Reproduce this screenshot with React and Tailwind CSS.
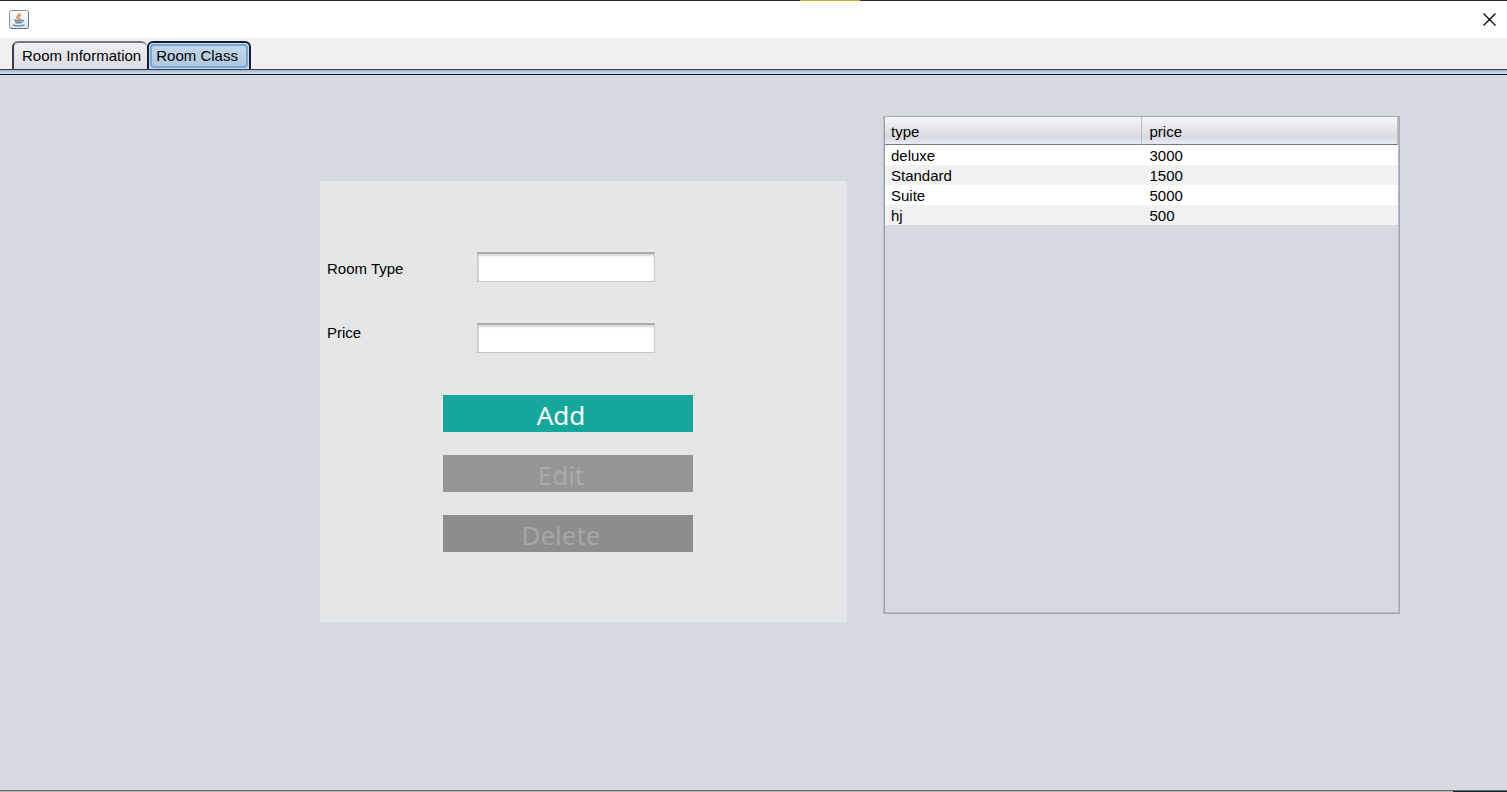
import { useState } from 'react'

const rooms = [
  { type: 'deluxe', price: 3000 },
  { type: 'Standard', price: 1500 },
  { type: 'Suite', price: 5000 },
  { type: 'hj', price: 500 },
]

const JavaIcon = () => (
  <svg width="20" height="19" viewBox="0 0 20 19" fill="none">
    <defs>
      <linearGradient id="cupBg" x1="0" y1="0" x2="0" y2="1">
        <stop offset="0" stopColor="#ffffff" />
        <stop offset="1" stopColor="#dfe5ea" />
      </linearGradient>
    </defs>
    <rect x="0.5" y="0.5" width="19" height="18" rx="2" fill="url(#cupBg)" stroke="#8796a5" />
    <path d="M1.5 18.5h17M19.5 2v15" stroke="#587691" />
    <path d="M10.5 3c.8 1.8-3.2 2.6-2.6 4.2.2.7 1.2.9 1 1.8M12 5.2c-2 1-2.6 1.8-1.6 2.8.4.4 0 .8-.4 1" stroke="#ee8d4a" strokeWidth="1.5" />
    <path d="M5.5 10h7.5l-.8 3H6.5z" fill="#8ba3b8" />
    <path d="M5 10h8.5M6.5 13h6M13 10.5c2.4-1 2.2 1.6-.6 2" stroke="#67869f" />
    <path d="M4 14.8c1.5 1.4 9.5 1.4 11.5 0" stroke="#67869f" strokeWidth="1.4" />
  </svg>
)

const CloseIcon = () => (
  <svg width="13" height="13" viewBox="0 0 13 13" stroke="#000" strokeWidth="1.2">
    <path d="M0.5 0.5l12 12M12.5 0.5l-12 12" />
  </svg>
)

const Tab = ({ label, active, onClick }) => (
  <button
    type="button"
    role="tab"
    aria-selected={active}
    onClick={onClick}
    className={
      active
        ? 'h-7 rounded-t-md border-2 border-b-0 border-[#141a30] bg-[#c9dcee] px-px'
        : 'h-7 rounded-t-md border-2 border-r-0 border-b-0 border-t-[#77787d] border-l-[#3d3e47] bg-linear-to-b from-[#eeeff3] to-[#dcdee5] pt-px pr-1.5 pl-2'
    }
  >
    {active ? (
      <span className="block h-6 rounded-sm border-2 border-[#77a5d4] bg-linear-to-b from-[#c3d6e8] to-[#afc9df] pr-2 pl-1 leading-5">
        {label}
      </span>
    ) : (
      label
    )}
  </button>
)

const Field = ({ id, label, labelClass }) => (
  <div className="flex items-start">
    <label htmlFor={id} className={`w-[150px] leading-5 ${labelClass}`}>
      {label}
    </label>
    <input
      id={id}
      type="text"
      className="h-[30px] w-[178px] border border-t-2 border-[#c6c7c9] border-t-[#a8a9ab] bg-white px-1.5 shadow-[inset_0_2px_2px_#d8d8da,inset_1px_0_0_#dcdddf] outline-none"
    />
  </div>
)

export default function App() {
  const [tab, setTab] = useState('Room Class')

  return (
    <div className="flex min-h-screen flex-col bg-[#d6d9e0] font-['Liberation_Sans',Arial,sans-serif] text-[15px] text-black">
      <div className="flex h-px justify-center bg-[#29272a]">
        <span className="ml-[153px] w-[60px] bg-[#c9ab2c]" />
      </div>

      {/* Title bar */}
      <header className="flex h-[37px] items-center justify-between bg-white pr-[11px] pb-px pl-[9px]">
        <JavaIcon />
        <button type="button" aria-label="Close">
          <CloseIcon />
        </button>
      </header>

      {/* Tabs */}
      <div role="tablist" className="flex h-8 items-end border-b border-[#3a3d48] bg-[#f0f0f0] pl-3">
        {['Room Information', 'Room Class'].map((name) => (
          <Tab key={name} label={name} active={tab === name} onClick={() => setTab(name)} />
        ))}
      </div>
      <div className="h-[5px] border-b border-[#0d1226] bg-linear-to-b from-[#9fb4ca] to-[#d5e8fb]" />

      <main className="grid flex-1 grid-cols-[527fr_517fr] items-start gap-9 pt-[41px] pr-[107px] pb-8 pl-[320px]">
        {/* Room class form */}
        <form className="mt-[65px] bg-[#e5e6e8] pt-[71px] pb-[70px]" onSubmit={(e) => e.preventDefault()}>
          <div className="flex flex-col gap-[41px] pl-[7px]">
            <Field id="roomType" label="Room Type" labelClass="pt-[7px]" />
            <Field id="price" label="Price" labelClass="pt-0" />
          </div>
          <div className="mt-[42px] ml-[123px] flex w-[250px] flex-col gap-[23px] font-['Noto_Sans',sans-serif] text-[26px] leading-[37px]">
            <button type="submit" className="h-[37px] bg-[#14a89d] pt-0.5 pr-3.5 text-white">
              Add
            </button>
            <button type="button" disabled className="h-[37px] bg-[#969696] pt-0.5 pr-3.5 text-[#aaaaaa]">
              Edit
            </button>
            <button type="button" disabled className="h-[37px] bg-[#8d8d8d] pt-0.5 pr-3.5 text-[#a6a6a6]">
              Delete
            </button>
          </div>
        </form>

        {/* Room class list */}
        <div className="min-h-[498px] border border-[#a5a8b2] border-l-[#b9bcc5] shadow-[inset_1px_0_0_#9ea1ab,inset_-1px_-1px_0_#b5b8c2]">
          <div className="px-px">
            <table className="w-full table-fixed border-separate border-spacing-0 text-left">
              <thead>
                <tr className="h-7 bg-linear-to-b from-[#f7f8fa] via-[#d8d9de] via-70% to-[#e8edf8]">
                  <th className="border-r border-b border-r-[#b9bcc5] border-b-[#737781] p-0 pt-0.5 pl-1.5 leading-5 font-normal">type</th>
                  <th className="border-r border-b border-r-[#b9bcc5] border-b-[#737781] p-0 pt-0.5 pl-2 leading-5 font-normal">price</th>
                </tr>
              </thead>
              <tbody>
                {rooms.map((room) => (
                  <tr key={room.type} className="h-5 bg-white leading-[18px] even:bg-[#f1f1f1]">
                    <td className="p-0 pt-0.5 pl-1.5">{room.type}</td>
                    <td className="p-0 pt-0.5 pl-2">{room.price}</td>
                  </tr>
                ))}
              </tbody>
            </table>
          </div>
        </div>
      </main>

      <footer className="flex h-0.5 justify-end border-t border-[#686b6c] bg-[#b5b7b5]">
        <span className="w-[54px] bg-[#10242e]" />
      </footer>
    </div>
  )
}
